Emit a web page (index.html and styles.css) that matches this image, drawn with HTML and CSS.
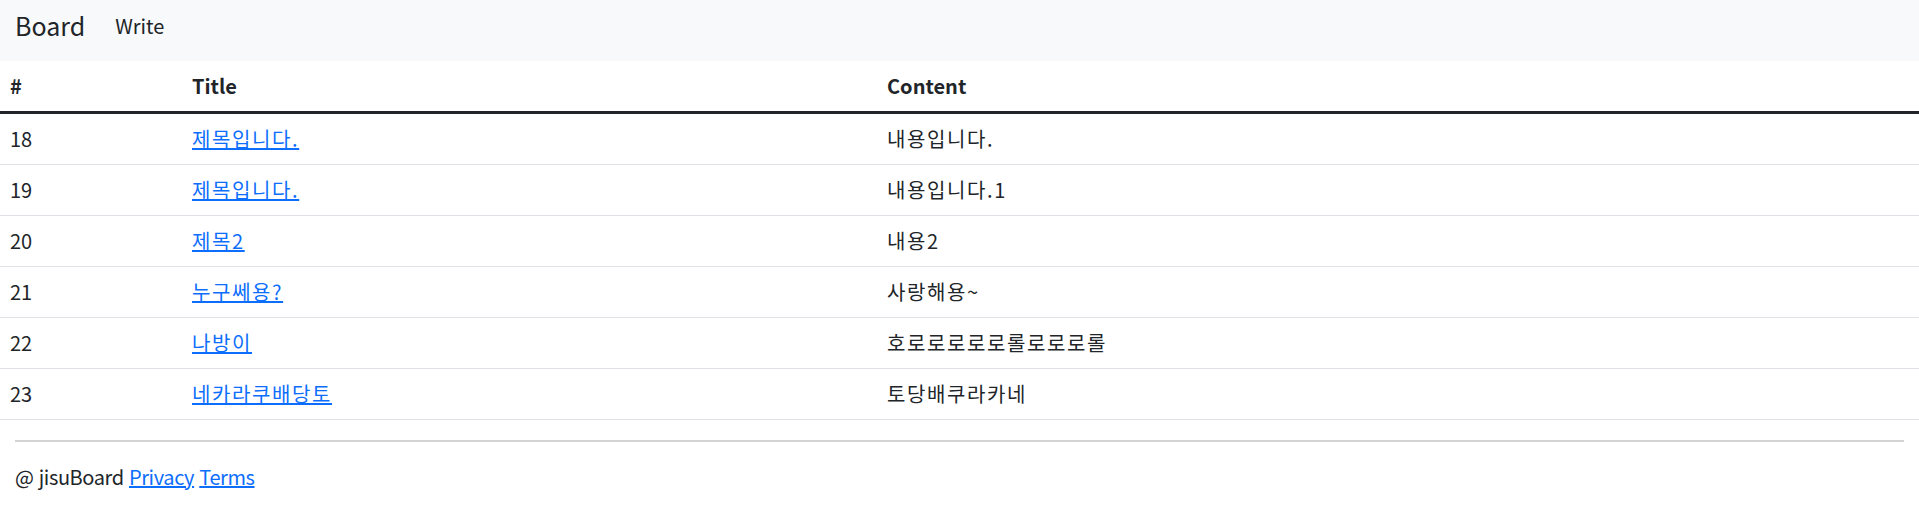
FILE: index.html
```html
<!DOCTYPE html>
<html lang="ko">
<head>
<meta charset="utf-8">
<title>Board</title>
<link rel="stylesheet" href="styles.css">
</head>
<body>
<nav class="navbar">
  <a class="brand" href="#">Board</a>
  <a class="nav-link" href="#">Write</a>
</nav>
<table class="board">
  <colgroup>
    <col class="col-num">
    <col class="col-title">
    <col>
  </colgroup>
  <thead>
    <tr><th>#</th><th>Title</th><th>Content</th></tr>
  </thead>
  <tbody>
    <tr><td>18</td><td class="ko"><a href="#">제목입니다.</a></td><td class="ko">내용입니다.</td></tr>
    <tr><td>19</td><td class="ko"><a href="#">제목입니다.</a></td><td class="ko">내용입니다.1</td></tr>
    <tr><td>20</td><td class="ko"><a href="#">제목2</a></td><td class="ko">내용2</td></tr>
    <tr><td>21</td><td class="ko"><a href="#">누구쎄용?</a></td><td class="ko">사랑해용~</td></tr>
    <tr><td>22</td><td class="ko"><a href="#">나방이</a></td><td class="ko">호로로로로로롤로로로롤</td></tr>
    <tr><td>23</td><td class="ko"><a href="#">네카라쿠배당토</a></td><td class="ko">토당배쿠라카네</td></tr>
  </tbody>
</table>
<footer class="footer">
  <hr class="divider">
  <p class="copy">@ jisuBoard <a href="#">Privacy</a> <a href="#">Terms</a></p>
</footer>
</body>
</html>
```
FILE: styles.css
```css
* { box-sizing: border-box; }
html, body { margin: 0; padding: 0; }
body {
  font-family: "Noto Sans CJK KR", "Noto Sans", sans-serif;
  font-size: 20px;
  line-height: 30px;
  color: #212529;
  background: #fff;
}
a { color: #0d6efd; text-decoration: underline; }

.navbar {
  display: flex;
  align-items: center;
  height: 61px;
  padding: 0 15px 10px;
  background: #f8f9fa;
}
.brand {
  font-size: 25px;
  line-height: 37px;
  color: #212529;
  text-decoration: none;
  margin-right: 20px;
}
.nav-link {
  font-size: 20px;
  line-height: 30px;
  padding: 10px;
  color: #212529;
  text-decoration: none;
}

.board {
  width: 100%;
  border-collapse: collapse;
  table-layout: fixed;
}
.col-num { width: 182px; }
.col-title { width: 695px; }
.board th, .board td {
  padding: 10px;
  text-align: left;
  vertical-align: top;
}
.board th { font-weight: 700; }
.board .ko { letter-spacing: 1.6px; }
.board thead tr { border-bottom: 3px solid #212529; }
.board tbody tr { border-bottom: 1px solid #dee2e6; }

.footer { padding: 0 15px; }
.divider {
  margin: 20px 0;
  border: 0;
  border-top: 2px solid #d3d4d5;
}
.copy { margin: 0; letter-spacing: -0.4px; }
```
